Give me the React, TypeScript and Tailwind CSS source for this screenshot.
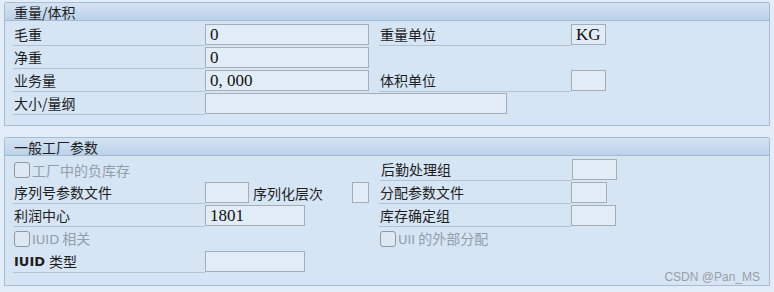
import React from 'react';

const cjk = { fontFamily: '"Noto Sans CJK SC", "Noto Sans", sans-serif' };
const serif = { fontFamily: '"Liberation Serif", "Noto Sans CJK SC", serif' };
const sans = { fontFamily: '"DejaVu Sans", "Noto Sans CJK SC", sans-serif' };

function Label({ text, w = 'w-[192px]', line = true }: { text: React.ReactNode; w?: string; line?: boolean }) {
  return (
    <div
      className={`${w} h-[23px] flex items-center pl-[1px] text-[14px] leading-none text-[#1e1e1e] shrink-0 ${
        line ? 'border-b border-[#b4c3d3]' : ''
      }`}
      style={cjk}
    >
      {text}
    </div>
  );
}

function Field({ w, value = '' }: { w: string; value?: string }) {
  return (
    <div
      className={`${w} h-[21px] mt-[1px] self-start shrink-0 border border-[#a5adb6] bg-[#e1ecf7] flex items-center pl-[4px] text-[17px] leading-none text-[#111]`}
      style={serif}
    >
      {value}
    </div>
  );
}

function Check({ text }: { text: React.ReactNode }) {
  return (
    <div className="h-[23px] flex items-center gap-[2px] text-[14px] leading-none text-[#929eab]" style={cjk}>
      <span className="w-[16px] h-[16px] rounded-[3px] border border-[#8f98a3] bg-[#dde8f3] shrink-0" />
      <span>{text}</span>
    </div>
  );
}

function Row({ children }: { children: React.ReactNode }) {
  return <div className="flex h-[23px]">{children}</div>;
}

function Group({ title, children, pb }: { title: string; children: React.ReactNode; pb: string }) {
  return (
    <div className="mx-[4px] border border-[#a6bcd4] bg-[#d5e5f4] rounded-t-[2px]">
      <div
        className="h-[18px] bg-gradient-to-b from-[#d4e3f2] to-[#bcd2e9] border-b border-[#a3b9d2] flex items-center pl-[9px] text-[14px] leading-none text-[#1e1e1e]"
        style={cjk}
      >
        {title}
      </div>
      <div className={`pl-[8px] pt-[2px] ${pb}`}>{children}</div>
    </div>
  );
}

export default function App() {
  return (
    <div className="relative w-[774px] h-[292px] bg-[#e3edf7] pt-[2px] overflow-hidden">
      <Group title="重量/体积" pb="pb-[10px]">
        <Row>
          <Label text="毛重" />
          <Field w="w-[164px]" value="0" />
          <div className="w-[10px] shrink-0" />
          <Label text="重量单位" />
          <Field w="w-[35px]" value="KG" />
        </Row>
        <Row>
          <Label text="净重" />
          <Field w="w-[164px]" value="0" />
        </Row>
        <Row>
          <Label text="业务量" />
          <Field w="w-[164px]" value="0, 000" />
          <div className="w-[10px] shrink-0" />
          <Label text="体积单位" />
          <Field w="w-[35px]" />
        </Row>
        <Row>
          <Label text="大小/量纲" />
          <Field w="w-[302px]" />
        </Row>
      </Group>

      <div className="h-[11px]" />

      <Group title="一般工厂参数" pb="pb-[12px]">
        <Row>
          <div className="w-[367px] shrink-0 pl-[1px]">
            <Check text="工厂中的负库存" />
          </div>
          <Label text="后勤处理组" />
          <Field w="w-[45px]" />
        </Row>
        <Row>
          <Label text="序列号参数文件" />
          <Field w="w-[44px]" />
          <Label text="序列化层次" w="w-[103px] pl-[4px]" line={false} />
          <Field w="w-[17px]" />
          <div className="w-[10px] shrink-0" />
          <Label text="分配参数文件" />
          <Field w="w-[36px]" />
        </Row>
        <Row>
          <Label text="利润中心" />
          <Field w="w-[100px]" value="1801" />
          <div className="w-[74px] shrink-0" />
          <Label text="库存确定组" />
          <Field w="w-[45px]" />
        </Row>
        <Row>
          <div className="w-[367px] shrink-0 pl-[1px]">
            <Check
              text={
                <>
                  <span style={sans} className="text-[13px]">IUID</span> 相关
                </>
              }
            />
          </div>
          <Check
            text={
              <>
                <span style={sans} className="text-[13px]">UII</span> 的外部分配
              </>
            }
          />
        </Row>
        <Row>
          <Label
            text={
              <>
                <span style={sans} className="text-[13px] font-bold mr-[4px]">IUID</span>类型
              </>
            }
          />
          <Field w="w-[100px]" />
        </Row>
      </Group>

      <div
        className="absolute right-[14px] bottom-[9px] text-[12px] leading-none text-[#9a9ea3]"
        style={{ fontFamily: '"Liberation Sans", sans-serif' }}
      >
        CSDN @Pan_MS
      </div>
    </div>
  );
}
